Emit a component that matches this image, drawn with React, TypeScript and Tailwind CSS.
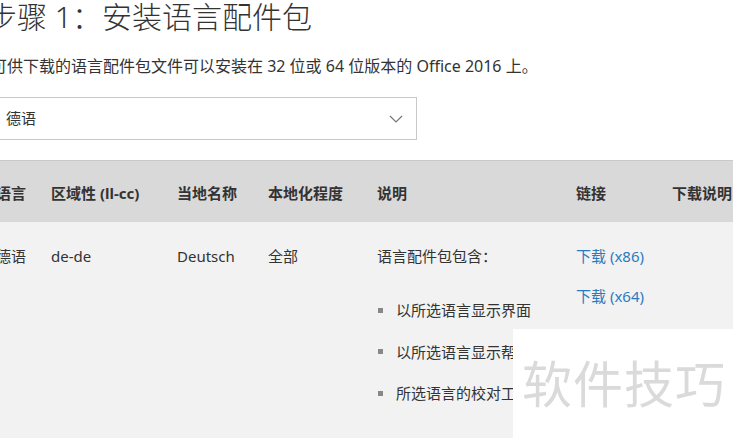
import React from 'react';

const font = "font-['Noto_Sans','Noto_Sans_CJK_SC',sans-serif]";

const columns = [
  { label: '语言', w: 'w-[55px]' },
  { label: '区域性 (ll-cc)', w: 'w-[126px]' },
  { label: '当地名称', w: 'w-[91px]' },
  { label: '本地化程度', w: 'w-[109px]' },
  { label: '说明', w: 'w-[199px]' },
  { label: '链接', w: 'w-[96px]' },
  { label: '下载说明', w: 'w-[120px]' },
];

const features = ['以所选语言显示界面', '以所选语言显示帮助', '所选语言的校对工具'];

const Chevron = () => (
  <svg width="14" height="8" viewBox="0 0 14 8" fill="none" stroke="#777" strokeWidth="1.2">
    <path d="M1 1l6 6 6-6" />
  </svg>
);

const App: React.FC = () => {
  return (
    <div className={`relative w-[733px] h-[438px] overflow-hidden bg-white text-[#333] ${font}`}>
      {/* Heading */}
      <h1 className="ml-[-13px] mt-[-1px] mb-[-2px] text-[30px] leading-[36px] font-light text-[#333] whitespace-nowrap">
        步骤 1：安装语言配件包
      </h1>

      <p className="ml-[-9px] mt-[21px] text-[16px] leading-6 text-[#333] whitespace-nowrap">
        可供下载的语言配件包文件可以安装在 32 位或 64 位版本的 Office 2016 上。
      </p>

      {/* Language select */}
      <div className="ml-[-10px] mt-[19px] w-[427px] h-[43px] border border-[#c8c8c8] flex items-center justify-between pl-[15px] pr-[13px]">
        <span className="text-[15px] text-[#333]">德语</span>
        <Chevron />
      </div>

      {/* Table */}
      <div className="ml-[-4px] mt-[20px] w-[800px]">
        <div className="flex h-[62px] items-center pt-[3px] bg-[#d9d9d9] border-t border-[#c9c9c9]">
          {columns.map(c => (
            <div key={c.label} className={`${c.w} shrink-0 text-[15px] font-bold text-[#333] whitespace-nowrap`}>
              {c.label}
            </div>
          ))}
        </div>
        <div className="flex bg-[#f2f2f2] pt-[22px] h-[300px] text-[15px] leading-6 text-[#333]">
          <div className="w-[55px] shrink-0">德语</div>
          <div className="w-[126px] shrink-0">de-de</div>
          <div className="w-[91px] shrink-0">Deutsch</div>
          <div className="w-[109px] shrink-0">全部</div>
          <div className="w-[199px] shrink-0">
            <div>语言配件包包含：</div>
            <ul className="mt-[30px] flex flex-col gap-[17.5px]">
              {features.map(f => (
                <li key={f} className="flex items-center whitespace-nowrap">
                  <span className="w-[5px] h-[5px] bg-[#888] mr-[13px] ml-[1px]"></span>
                  {f}
                </li>
              ))}
            </ul>
          </div>
          <div className="w-[96px] shrink-0 flex flex-col gap-[16px] text-[#2a7cc0]">
            <span>下载 (x86)</span>
            <span>下载 (x64)</span>
          </div>
          <div className="flex-1"></div>
        </div>
      </div>

      {/* Watermark */}
      <div className="absolute left-[513px] top-[329px] w-[220px] h-[109px] bg-white flex items-start">
        <span className="ml-[9px] mt-[27px] text-[50px] leading-[56px] tracking-[1px] text-[#dadada] whitespace-nowrap">
          软件技巧
        </span>
      </div>
    </div>
  );
};

export default App;
